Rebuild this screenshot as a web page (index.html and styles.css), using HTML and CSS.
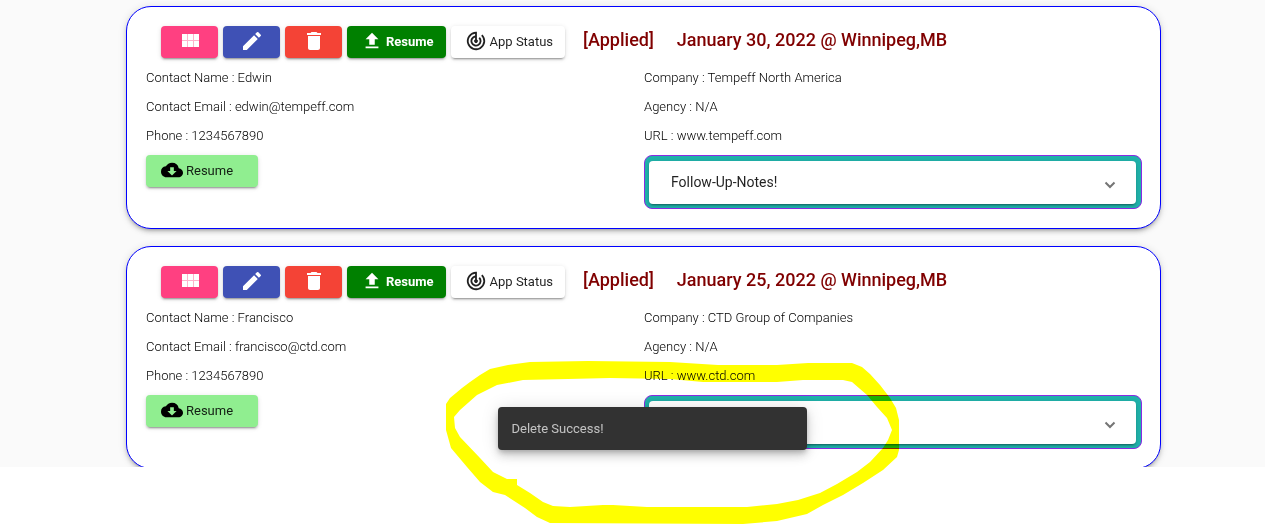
FILE: index.html
```html
<!DOCTYPE html>
<html lang="en">
<head>
<meta charset="utf-8">
<title>Applications</title>
<link rel="stylesheet" href="styles.css">
</head>
<body>
<svg class="sprite" aria-hidden="true">
  <symbol id="grid" viewBox="0 0 24 24"><path d="M4 5h5v6H4zM10 5h5v6h-5zM16 5h5v6h-5zM4 12h5v6H4zM10 12h5v6h-5zM16 12h5v6h-5z"/><path opacity=".6" d="M4 5h17v13H4z"/></symbol>
  <symbol id="edit" viewBox="0 0 24 24"><path d="M3 17.25V21h3.75L17.81 9.94l-3.75-3.75L3 17.25zM20.71 7.04a1 1 0 0 0 0-1.41l-2.34-2.34a1 1 0 0 0-1.41 0l-1.83 1.83 3.75 3.75 1.83-1.83z"/></symbol>
  <symbol id="delete" viewBox="0 0 24 24"><path d="M6 19c0 1.1.9 2 2 2h8c1.1 0 2-.9 2-2V7H6v12zM19 4h-3.5l-1-1h-5l-1 1H5v2h14V4z"/></symbol>
  <symbol id="upload" viewBox="0 0 24 24"><path d="M9 16h6v-6h4l-7-7-7 7h4zm-4 2h14v2H5z"/></symbol>
  <symbol id="status" viewBox="0 0 24 24"><path d="M19.07 4.93l-1.41 1.41A8 8 0 1 1 11 4.07v2.02A6 6 0 1 0 16.24 7.76l-1.41 1.41A4 4 0 1 1 11 8.14v2.14A2 2 0 1 0 13 10.28V2h-1a10 10 0 1 0 7.07 2.93z"/></symbol>
  <symbol id="cloud" viewBox="0 0 24 24"><path d="M19.35 10.04A7.49 7.49 0 0 0 12 4C9.11 4 6.6 5.64 5.35 8.04A5.99 5.99 0 0 0 0 14c0 3.31 2.69 6 6 6h13c2.76 0 5-2.24 5-5 0-2.64-2.05-4.78-4.65-4.96zM17 13l-5 5-5-5h3V9h4v4h3z"/></symbol>
  <symbol id="chevron" viewBox="0 0 12 8"><path d="M1.5 1.5L6 6l4.500-4.500" fill="none" stroke="currentColor" stroke-width="2"/></symbol>
</svg>

<main class="viewport">
  <article class="card">
    <header class="toolbar">
      <button class="btn btn-icon pink" aria-label="Details"><svg class="icon"><use href="#grid"/></svg></button>
      <button class="btn btn-icon indigo" aria-label="Edit"><svg class="icon"><use href="#edit"/></svg></button>
      <button class="btn btn-icon red" aria-label="Delete"><svg class="icon"><use href="#delete"/></svg></button>
      <button class="btn green"><svg class="icon small"><use href="#upload"/></svg>Resume</button>
      <button class="btn plain"><svg class="icon small"><use href="#status"/></svg>App Status</button>
      <h2 class="title"><span>[Applied]</span><span>January 30, 2022 @ Winnipeg,MB</span></h2>
    </header>
    <div class="columns">
      <div class="column">
        <p class="row">Contact Name : Edwin</p>
        <p class="row">Contact Email : edwin@tempeff.com</p>
        <p class="row">Phone : 1234567890</p>
        <button class="btn download"><svg class="icon small"><use href="#cloud"/></svg>Resume</button>
      </div>
      <div class="column">
        <p class="row">Company : Tempeff North America</p>
        <p class="row">Agency : N/A</p>
        <p class="row">URL : www.tempeff.com</p>
        <div class="notes"><button class="notes-header">Follow-Up-Notes!<svg class="chevron"><use href="#chevron"/></svg></button></div>
      </div>
    </div>
  </article>

  <article class="card">
    <header class="toolbar">
      <button class="btn btn-icon pink" aria-label="Details"><svg class="icon"><use href="#grid"/></svg></button>
      <button class="btn btn-icon indigo" aria-label="Edit"><svg class="icon"><use href="#edit"/></svg></button>
      <button class="btn btn-icon red" aria-label="Delete"><svg class="icon"><use href="#delete"/></svg></button>
      <button class="btn green"><svg class="icon small"><use href="#upload"/></svg>Resume</button>
      <button class="btn plain"><svg class="icon small"><use href="#status"/></svg>App Status</button>
      <h2 class="title"><span>[Applied]</span><span>January 25, 2022 @ Winnipeg,MB</span></h2>
    </header>
    <div class="columns">
      <div class="column">
        <p class="row">Contact Name : Francisco</p>
        <p class="row">Contact Email : francisco@ctd.com</p>
        <p class="row">Phone : 1234567890</p>
        <button class="btn download"><svg class="icon small"><use href="#cloud"/></svg>Resume</button>
      </div>
      <div class="column">
        <p class="row">Company : CTD Group of Companies</p>
        <p class="row">Agency : N/A</p>
        <p class="row">URL : www.ctd.com</p>
        <div class="notes"><button class="notes-header" aria-label="Notes"><svg class="chevron"><use href="#chevron"/></svg></button></div>
      </div>
    </div>
  </article>

  <div class="snackbar" role="status">Delete Success!</div>
</main>

<svg class="marker" viewBox="440 356 464 168" aria-hidden="true">
  <path fill-rule="evenodd" d="M446 404L450 398 462 388 470 382 480 375 490 369 508 365 530 362 588 361 670 362 718 365 777 365 808 363 852 363 862 367 870 374 880 385 890 398 896 408 899 420 899 450 897 457 883 470 863 483 843 495 823 505 807 514 777 521 743 524 550 523 537 517 525 508 505 495 493 492 480 482 467 467 451 448 446 430z
  M454 417L455 428 460 437 480 458 493 472 507 479 517 479 517 485 530 493 543 502 553 506 570 507 603 505 613 505 647 507 747 507 777 504 798 500 820 493 837 484 857 472 870 462 883 448 888 440 892 430 887 418 877 407 867 395 852 382 843 380 803 380 777 382 703 382 670 379 610 378 568 379 523 380 497 385 477 395 460 410z"/>
</svg>
</body>
</html>
```

FILE: styles.css
```css
* {
  box-sizing: border-box;
}

body {
  margin: 0;
  position: relative;
  min-height: 100vh;
  overflow: hidden;
  background: #fff;
  color: rgba(0, 0, 0, 0.87);
  font-family: Roboto, "Liberation Sans", sans-serif;
  font-size: 13px;
}

.sprite {
  position: absolute;
  width: 0;
  height: 0;
}

.viewport {
  position: relative;
  display: flex;
  flex-direction: column;
  gap: 17px;
  height: calc(100vh - 57px);
  padding: 6px 104px 0 126px;
  overflow: hidden;
  background: #fafafa;
}

.card {
  flex: none;
  padding: 19px 18px 19px 19px;
  border: 1px solid #00f;
  border-radius: 25px;
  background: #fff;
  box-shadow: 0 3px 3px -2px rgba(0, 0, 0, 0.2), 0 3px 4px rgba(0, 0, 0, 0.14), 0 1px 8px rgba(0, 0, 0, 0.12);
}

.toolbar {
  display: flex;
  align-items: center;
  gap: 5px;
  margin-bottom: 6px;
  padding-left: 15px;
}

.btn {
  display: flex;
  align-items: center;
  height: 32px;
  padding: 0 12px 2px 14px;
  border: 0;
  border-radius: 4px;
  color: #fff;
  font: 500 13px Roboto, "Liberation Sans", sans-serif;
  white-space: nowrap;
  box-shadow: 0 3px 1px -2px rgba(0, 0, 0, 0.2), 0 2px 2px rgba(0, 0, 0, 0.14), 0 1px 5px rgba(0, 0, 0, 0.12);
}

.btn-icon {
  justify-content: center;
  width: 57px;
  padding: 0 0 2px;
}

.icon {
  width: 24px;
  height: 24px;
  fill: currentColor;
}

.icon.small {
  width: 22px;
  height: 22px;
  margin-right: 3px;
}

.pink {
  background: #ff4081;
}

.indigo {
  background: #3f51b5;
}

.red {
  background: #f44336;
}

.green {
  background: green;
  font-weight: 700;
}

.plain {
  background: #fff;
  color: rgba(0, 0, 0, 0.87);
  font-weight: 400;
}

.title {
  display: flex;
  gap: 23px;
  margin: 0 0 4px 13px;
  color: maroon;
  font-size: 18px;
  font-weight: 500;
  line-height: 24px;
  white-space: nowrap;
}

.columns {
  display: grid;
  grid-template-columns: 1fr 1fr;
}

.column {
  display: flex;
  flex-direction: column;
  align-items: flex-start;
  gap: 1px;
}

.row {
  margin: 0;
  color: #000;
  font-weight: 300;
  line-height: 28px;
}

.download {
  width: 112px;
  margin-top: 4px;
  padding-left: 15px;
  background: lightgreen;
  color: rgba(0, 0, 0, 0.87);
  font-weight: 400;
}

.download .icon {
  color: #000;
}

.notes {
  width: 100%;
  margin-top: 4px;
  padding: 5px 5px 4px 4px;
  border: 1px solid blueviolet;
  border-radius: 8px;
  background: lightseagreen;
}

.notes-header {
  display: flex;
  align-items: center;
  width: 100%;
  height: 43px;
  padding: 0 20px 2px 22px;
  border: 0;
  border-radius: 4px;
  background: #fff;
  color: rgba(0, 0, 0, 0.87);
  font: 400 14px Roboto, "Liberation Sans", sans-serif;
  box-shadow: 0 3px 1px -2px rgba(0, 0, 0, 0.2), 0 2px 2px rgba(0, 0, 0, 0.14), 0 1px 5px rgba(0, 0, 0, 0.12);
}

.chevron {
  width: 12px;
  height: 8px;
  margin: 6px 0 0 auto;
  color: #757575;
}

.snackbar {
  position: absolute;
  bottom: 17px;
  left: calc(50% - 135px);
  width: 309px;
  padding: 12px 14px;
  border-radius: 4px;
  background: #323232;
  color: rgba(255, 255, 255, 0.7);
  line-height: 19px;
  box-shadow: 0 3px 5px -1px rgba(0, 0, 0, 0.2), 0 6px 10px rgba(0, 0, 0, 0.14), 0 1px 18px rgba(0, 0, 0, 0.12);
}

.marker {
  position: absolute;
  top: 356px;
  left: calc(50% - 193px);
  width: 464px;
  height: 168px;
  fill: #ff0;
  mix-blend-mode: multiply;
  pointer-events: none;
}
```
